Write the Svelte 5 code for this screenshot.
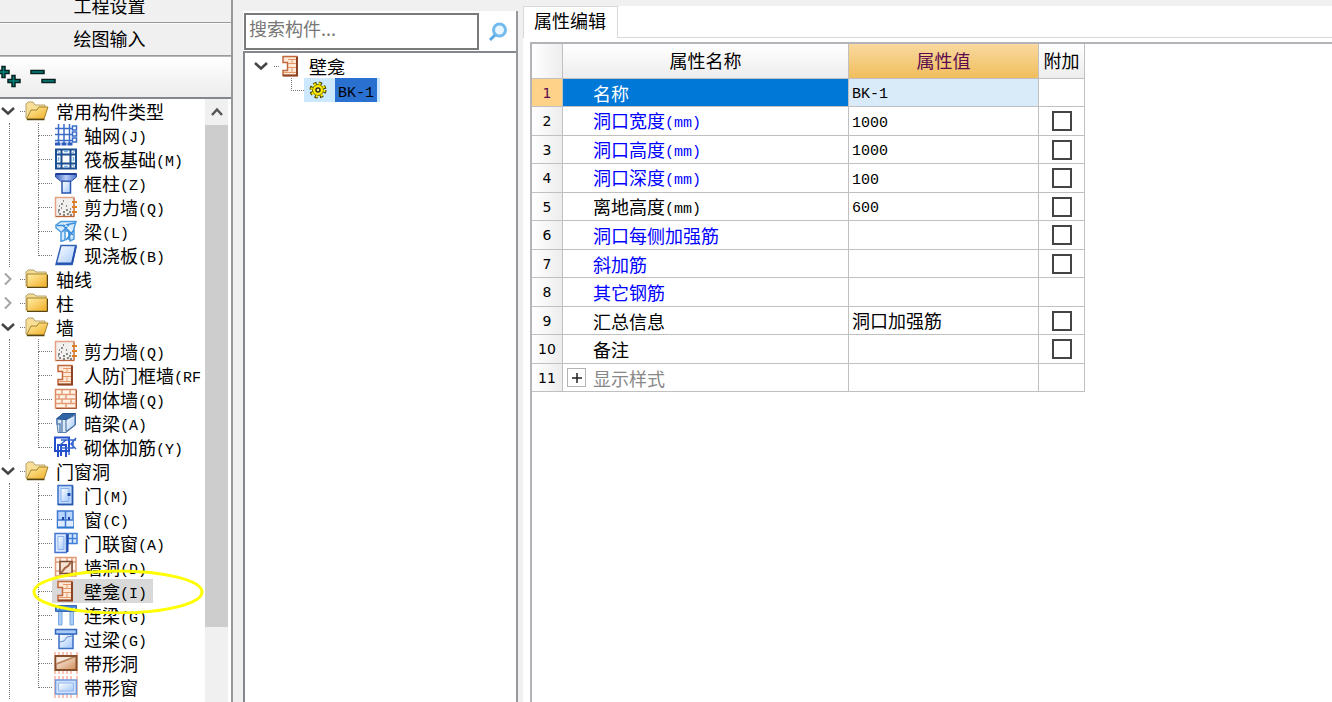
<script>
	let groups = $state([
		{
			name: '常用构件类型',
			open: true,
			items: [
				{ name: '轴网', code: '(J)', icon: 'grid' },
				{ name: '筏板基础', code: '(M)', icon: 'raft' },
				{ name: '框柱', code: '(Z)', icon: 'column' },
				{ name: '剪力墙', code: '(Q)', icon: 'shear' },
				{ name: '梁', code: '(L)', icon: 'beam' },
				{ name: '现浇板', code: '(B)', icon: 'slab' }
			]
		},
		{ name: '轴线', open: false, items: [] },
		{ name: '柱', open: false, items: [] },
		{
			name: '墙',
			open: true,
			items: [
				{ name: '剪力墙', code: '(Q)', icon: 'shear' },
				{ name: '人防门框墙', code: '(RF', icon: 'niche' },
				{ name: '砌体墙', code: '(Q)', icon: 'brick' },
				{ name: '暗梁', code: '(A)', icon: 'hidden' },
				{ name: '砌体加筋', code: '(Y)', icon: 'rebar' }
			]
		},
		{
			name: '门窗洞',
			open: true,
			items: [
				{ name: '门', code: '(M)', icon: 'door' },
				{ name: '窗', code: '(C)', icon: 'window' },
				{ name: '门联窗', code: '(A)', icon: 'doorwin' },
				{ name: '墙洞', code: '(D)', icon: 'hole' },
				{ name: '壁龛', code: '(I)', icon: 'niche', marked: true },
				{ name: '连梁', code: '(G)', icon: 'link' },
				{ name: '过梁', code: '(G)', icon: 'lintel' },
				{ name: '带形洞', code: '', icon: 'striphole' },
				{ name: '带形窗', code: '', icon: 'stripwin' }
			]
		}
	]);

	let rows = $state([
		{ name: '名称', value: 'BK-1', kind: 'active' },
		{ name: '洞口宽度', unit: '(mm)', value: '1000', kind: 'key', extra: false },
		{ name: '洞口高度', unit: '(mm)', value: '1000', kind: 'key', extra: false },
		{ name: '洞口深度', unit: '(mm)', value: '100', kind: 'key', extra: false },
		{ name: '离地高度', unit: '(mm)', value: '600', kind: 'plain', extra: false },
		{ name: '洞口每侧加强筋', value: '', kind: 'key', extra: false },
		{ name: '斜加筋', value: '', kind: 'key', extra: false },
		{ name: '其它钢筋', value: '', kind: 'key' },
		{ name: '汇总信息', value: '洞口加强筋', kind: 'plain', extra: false },
		{ name: '备注', value: '', kind: 'plain', extra: false },
		{ name: '显示样式', value: '', kind: 'folded' }
	]);

	let selected = $state('壁龛');
	let componentOpen = $state(true);

	function setAll(open) {
		groups.forEach((g) => {
			if (g.items.length) g.open = open;
		});
	}

	const isLatin = (text) => /^[\x20-\x7e]+$/.test(text);
</script>

{#snippet chevron(open)}
	<svg class="chevron" width="16" height="16" viewBox="0 0 16 16" aria-hidden="true">
		{#if open}
			<path d="M2 5L8 10.500L14 5" fill="none" stroke="#444" stroke-width="2.500" />
		{:else}
			<path d="M5 2.500L10.500 8L5 13.500" fill="none" stroke="#a6a6a6" stroke-width="2" />
		{/if}
	</svg>
{/snippet}

{#snippet folder(open)}
	<svg class="folder" width="24" height="20" viewBox="0 0 24 20" aria-hidden="true">
		{#if open}
			<path d="M1 17V3L3 1H8L10 4H20V8" fill="#f7df98" stroke="#b5a36e" />
			<path d="M1.500 18L6 9H12L14 6H23L19 18Z" fill="url(#gold)" stroke="#a5822f" />
			<path d="M2 18.500H19.500" stroke="#5a4413" stroke-width="1.500" />
		{:else}
			<path d="M1 17V3L3 1H9L11 3H21V17Z" fill="#f1dc97" stroke="#b5a36e" />
			<path d="M2 5H22V18H2Z" fill="url(#gold)" stroke="#a5822f" />
			<path d="M2 18.500H22.500V6" fill="none" stroke="#5a4413" />
		{/if}
	</svg>
{/snippet}

{#snippet icon(name)}
	<svg class="icon" width="24" height="22" viewBox="0 0 24 22" aria-hidden="true">
		{#if name === 'grid'}
			<path d="M1 4.500H18M1 10.500H18M1 16.500H18M4.500 0V19M10 0V19M15.500 0V19" stroke="#3a6cc8" stroke-width="1.500" />
			<path d="M18.500 2h4v4h-4zM18.500 8h4v4h-4zM18.500 14h4v4h-4z" fill="#fff" stroke="#3a6cc8" stroke-width="1.500" />
			<path d="M1 18.500h5.500v3H1zM7.500 18.500h5v3h-5zM13.500 18.500h5v3h-5z" fill="#2a5cbd" />
		{:else if name === 'raft'}
			<path d="M2 1.500H22V20.500H2Z" fill="#fff" stroke="#1c4f91" stroke-width="2" />
			<path d="M7.500 2V20M16.500 2V20M2 6.500H22M2 15.500H22" stroke="#1c4f91" stroke-width="2" />
			<path d="M10 3.500H14M10 18.500H14M4.500 9V13M19.500 9V13" stroke="#79b4e8" stroke-width="1.500" />
			<path d="M9 8.500H15V13.500H9Z" fill="#fff" />
			<path d="M3.500 3L6 5.500M20.500 3L18 5.500M3.500 19L6 16.500M20.500 19L18 16.500" stroke="#4b8cd0" />
		{:else if name === 'column'}
			<path d="M8 9H16.500V21H8Z" fill="url(#blue)" stroke="#2a57b0" stroke-width="1.500" />
			<path d="M1.500 1.500H22.500V5L17.500 9H6.500L1.500 5Z" fill="url(#column)" stroke="#2a4fa6" />
			<path d="M2 2H22" stroke="#1d3f98" stroke-width="2" />
		{:else if name === 'shear'}
			<path d="M1.500 1.500H20V20.500H1.500Z" fill="#f2f0ef" stroke="#e3a283" stroke-width="1.500" />
			<path d="M20 2V20.500H2" fill="none" stroke="#b9643a" />
			<path d="M4 14h2M7 12h1M5 18h2M9 16h2M12 14h2M15 16h2M13 18h2M16 13h1M7 8h2M5 10h1M9 5h1M12 10h1M9 19h2M16 19h2M4 16h1" stroke="#666" stroke-width="1.500" />
			<path d="M18 6H23M18 11H23M18 16H23" stroke="#dc8023" stroke-width="2" />
		{:else if name === 'beam'}
			<path d="M2 5L7 1.500H22L20 8V19L16 21L15 12L11 10V20L7 21.500V12L2 8Z" fill="#d5eafc" stroke="#4b9be0" stroke-width="1.500" />
			<path d="M3 5.500H9L19 15M9 5.500L21 3M8 12L15 5M12 20L20 10M15 12V20" fill="none" stroke="#3a8ddb" stroke-width="1.500" />
			<path d="M10 3.500L18 11" stroke="#fff" />
		{:else if name === 'slab'}
			<path d="M7 1.500H22L18 20.500H2Z" fill="url(#blue)" stroke="#3563b5" stroke-width="1.500" />
			<path d="M2 19.500H18L22 2" fill="none" stroke="#2354b0" stroke-width="2" />
		{:else if name === 'niche'}
			<path d="M4 1.500H18V20.500H4V15.500H8.500V7.500H4Z" fill="#ffe9d6" stroke="#c1673c" stroke-width="1.500" />
			<path d="M9 4.500H17M9 8.500H17M9 12.500H17M5 17.500H17M13 5V8M13 13V17" stroke="#e29a6b" />
			<path d="M18 2V20.500H4" fill="none" stroke="#8d4321" stroke-width="2" />
		{:else if name === 'brick'}
			<path d="M1.500 1.500H22V20H1.500Z" fill="#fff3e8" stroke="#d98a66" stroke-width="1.500" />
			<path d="M2 6.500H22M2 11H22M2 15.500H22M8 2V6M16 2V6M12 7V11M8 11V15M17 11V15M5 7V11M12 16V20" stroke="#e39c76" stroke-width="1.500" />
			<path d="M2 20.500H22.500V2" fill="none" stroke="#a85b38" />
		{:else if name === 'hidden'}
			<path d="M2.500 7L9 1.500H21.500V13L12 20.500H4Z" fill="#dce8f5" stroke="#587ead" />
			<path d="M2.500 7L9 1.500H21.500L12 7.500Z" fill="#2f65a7" stroke="#24548f" />
			<path d="M12 8L21 3V13L12 19.500Z" fill="url(#blue)" stroke="#3a65a0" />
			<path d="M3 7V12H6V20M8 8V20" fill="none" stroke="#6087b8" stroke-width="1.500" />
		{:else if name === 'rebar'}
			<path d="M1 1.500H15V15H1ZM4 21V9H12V21M7 9V20" fill="none" stroke="#2450cb" stroke-width="2" />
			<path d="M7 4H22M19 4V12H6M6 9L12 4M22 2L17 8L22 13M15 15V19" fill="none" stroke="#3566cf" stroke-width="1.500" />
		{:else if name === 'door'}
			<path d="M4 1.500H18.500V20.500H4Z" fill="#c4dcff" stroke="#3a6fc4" stroke-width="1.500" />
			<path d="M7 4.500H15V17.500H7Z" fill="url(#blue)" stroke="#86b0ee" />
			<path d="M13.500 9h3v3h-3z" fill="#1c47a8" />
			<path d="M18.500 2V20.500H4" fill="none" stroke="#2557ab" stroke-width="1.500" />
		{:else if name === 'window'}
			<path d="M3.500 3H19V19.500H3.500Z" fill="#b7d5ff" stroke="#4079cf" stroke-width="1.500" />
			<path d="M4 12H19V19H4Z" fill="#dcebff" />
			<path d="M11.500 3V20M4 12H19" stroke="#4079cf" stroke-width="1.500" />
			<path d="M8 9h2v3H8zM14 9h2v3h-2z" fill="#1c47a8" />
			<path d="M3 19.500H20" stroke="#2f7ad0" stroke-width="2" />
		{:else if name === 'doorwin'}
			<path d="M1 1.500H12.500V20.500H1Z" fill="#dceaff" stroke="#4576cf" stroke-width="1.500" />
			<path d="M4 4.500H10V17.500H4Z" fill="url(#blue)" stroke="#8cb1ee" />
			<path d="M14 1.500H23V11.500H14ZM18.500 1V12M14 6.500H23" fill="#d5e7ff" stroke="#4280d8" stroke-width="1.500" />
			<path d="M13.500 2V20" stroke="#234fae" stroke-width="2" />
		{:else if name === 'hole'}
			<path d="M1.500 1.500H22V20H1.500ZM2 6H22M2 15H22M6 2V20M13 2V6M18 2V20" fill="#fff5ec" stroke="#e09c78" stroke-width="1.500" />
			<path d="M6 5.500H18V17.500H6Z" fill="#f6e2d2" stroke="#7d4a30" stroke-width="1.500" />
			<path d="M7 17L11 12L14 10L17 6" fill="none" stroke="#a06441" stroke-width="2" />
		{:else if name === 'link'}
			<path d="M4.500 7H8V21H4.500ZM16 7H19.500V21H16Z" fill="#a9cdf6" stroke="#78a9e2" />
			<path d="M1.500 1.500H22.500V7.500H1.500Z" fill="#4a83d4" stroke="#3567b9" />
			<path d="M3 4.500H22" stroke="#c5dcfa" stroke-width="1.500" stroke-dasharray="2 2" />
		{:else if name === 'lintel'}
			<path d="M5 6H19V20.500H5Z" fill="url(#blue)" stroke="#3a6fc4" stroke-width="1.500" />
			<path d="M1.500 1.500H22.500V6H1.500Z" fill="#a6c9f6" stroke="#3568bd" stroke-width="1.500" />
			<path d="M6 14L10 13L13 9L18 8" fill="none" stroke="#5b8cd2" />
		{:else if name === 'striphole'}
			<path d="M1 0V22M5 0V4M9 0V4M13 0V4M17 0V4M23 0V22M5 18V22M9 18V22M13 18V22M17 18V22" stroke="#fbc3b5" stroke-width="2" />
			<path d="M1.500 4H22.500V18H1.500Z" fill="url(#brown)" stroke="#85502d" stroke-width="2" />
			<path d="M2.500 5V13L10 10L22 5Z" fill="#b98560" />
			<path d="M2.500 5H18L2.500 11Z" fill="#f6e8dc" />
		{:else if name === 'stripwin'}
			<path d="M1 0V22M5 0V4M9 0V4M13 0V4M17 0V4M23 0V22M5 18V22M9 18V22M13 18V22M17 18V22" stroke="#fbc3b5" stroke-width="2" />
			<path d="M1.500 4H22.500V18H1.500Z" fill="#cfe0fb" stroke="#6f9be0" stroke-width="1.500" />
			<path d="M4.500 7H19.500V15H4.500Z" fill="url(#blue)" stroke="#94b8f0" />
		{/if}
	</svg>
{/snippet}

<svg class="defs" width="0" height="0" aria-hidden="true">
	<defs>
		<linearGradient id="gold" x1="0" y1="0" x2="1" y2="1">
			<stop offset="0" stop-color="#fff0a8" />
			<stop offset="1" stop-color="#f0ac24" />
		</linearGradient>
		<linearGradient id="blue" x1="0" y1="0" x2="1" y2="1">
			<stop offset="0" stop-color="#fff" />
			<stop offset="1" stop-color="#a3c8f9" />
		</linearGradient>
		<linearGradient id="column" x1="0" y1="0" x2="1" y2="0">
			<stop offset="0" stop-color="#3c62bd" />
			<stop offset="0.500" stop-color="#b7ccf8" />
			<stop offset="1" stop-color="#4a74cb" />
		</linearGradient>
		<linearGradient id="brown" x1="0" y1="0" x2="1" y2="1">
			<stop offset="0" stop-color="#fff" />
			<stop offset="1" stop-color="#d08a52" />
		</linearGradient>
	</defs>
</svg>

<div class="app">
	<aside class="modules">
		<button class="section">工程设置</button>
		<button class="section">绘图输入</button>
		<div class="toolbar">
			<button aria-label="+" onclick={() => setAll(true)}>
				<svg width="22" height="24" viewBox="0 0 22 24">
					<path d="M-2 5.500H2V1.500H5V5.500H9V8.500H5V12.500H2V8.500H-2Z" fill="#00857d" stroke="#06211f" stroke-width="1.500" />
					<path d="M8 14.500H12V10.500H15V14.500H20V17.500H15V21.500H12V17.500H8Z" fill="#00857d" stroke="#06211f" stroke-width="1.500" />
				</svg>
			</button>
			<button aria-label="-" onclick={() => setAll(false)}>
				<svg width="26" height="24" viewBox="0 0 26 24">
					<path d="M1 5.500H14V8.500H1ZM12 14.500H25V17.500H12Z" fill="#00857d" stroke="#06211f" stroke-width="1.500" />
				</svg>
			</button>
		</div>
		<div class="tree-box">
			<ul class="tree">
				{#each groups as group}
					<li>
						<button class="group" onclick={() => (group.open = !group.open)}>
							{@render chevron(group.open)}
							<span class="stub"></span>
							{@render folder(group.open)}
							<span>{group.name}</span>
						</button>
						{#if group.open}
							<ul class="children">
								{#each group.items as item}
									<li class="leaf">
										<button class:selected={selected === item.name} onclick={() => (selected = item.name)}>
											{@render icon(item.icon)}
											<span class="label">{item.name}<span class="latin">{item.code}</span></span>
										</button>
										{#if item.marked}
											<svg class="ring" width="172" height="46" viewBox="0 0 172 46" aria-hidden="true">
												<ellipse cx="86" cy="24" rx="84" ry="21" fill="none" stroke="#ff0" stroke-width="3" />
											</svg>
										{/if}
									</li>
								{/each}
							</ul>
						{/if}
					</li>
				{/each}
			</ul>
			<div class="scrollbar">
				<button aria-label="▲">
					<svg width="16" height="16" viewBox="0 0 16 16">
						<path d="M3 11L8 5.500L13 11" fill="none" stroke="#555" stroke-width="2.500" />
					</svg>
				</button>
				<div class="thumb"></div>
				<div class="track"></div>
			</div>
		</div>
	</aside>

	<section class="components">
		<form class="search" onsubmit={(e) => e.preventDefault()}>
			<input type="text" placeholder="搜索构件..." aria-label="搜索构件" />
			<button aria-label="搜索构件">
				<svg width="22" height="22" viewBox="0 0 22 22">
					<circle cx="12.500" cy="9" r="6" fill="#e9f6ff" stroke="#72bbee" stroke-width="3" />
					<path d="M8 14L3 19" stroke="#5aa8e2" stroke-width="3" />
				</svg>
			</button>
		</form>
		<ul class="instances">
			<li>
				<button class="parent" onclick={() => (componentOpen = !componentOpen)}>
					{@render chevron(componentOpen)}
					<span class="stub"></span>
					{@render icon('niche')}
					<span>壁龛</span>
				</button>
				{#if componentOpen}
					<ul>
						<li class="instance">
							<button>
								<svg width="18" height="18" viewBox="0 0 18 18" aria-hidden="true">
									<circle cx="9" cy="9" r="6.500" fill="none" stroke="#4a4700" stroke-width="4" stroke-dasharray="3 2.100" />
									<circle cx="9" cy="9" r="5.500" fill="#ffec00" stroke="#6d6800" />
									<circle cx="9" cy="9" r="6.500" fill="none" stroke="#ffec00" stroke-width="2" stroke-dasharray="2 3.100" />
									<circle cx="9" cy="9" r="2" fill="#fff56b" stroke="#333" stroke-width="1.500" />
								</svg>
								<span class="tag"><span class="latin">BK-1</span></span>
							</button>
						</li>
					</ul>
				{/if}
			</li>
		</ul>
	</section>

	<main class="properties">
		<div class="tabs">
			<button class="tab">属性编辑</button>
		</div>
		<div class="sheet">
			<table>
				<thead>
					<tr>
						<th class="num"></th>
						<th class="name">属性名称</th>
						<th class="value current">属性值</th>
						<th class="extra">附加</th>
					</tr>
				</thead>
				<tbody>
					{#each rows as row, i}
						<tr class={row.kind}>
							<th class="num" scope="row">{i + 1}</th>
							<td class="name">
								<div class="cell">
									<span class="fold">
										{#if row.kind === 'folded'}
											<button aria-label="+">
												<svg width="12" height="12" viewBox="0 0 12 12">
													<path d="M6 1V11M1 6H11" stroke="#222" stroke-width="1.500" />
												</svg>
											</button>
										{/if}
									</span>
									<span>{row.name}{#if row.unit}<span class="latin">{row.unit}</span>{/if}</span>
								</div>
							</td>
							<td class="value"><span class:latin={isLatin(row.value)}>{row.value}</span></td>
							<td class="extra">
								{#if row.extra !== undefined}
									<input type="checkbox" bind:checked={row.extra} aria-label={row.name} />
								{/if}
							</td>
						</tr>
					{/each}
				</tbody>
			</table>
		</div>
	</main>
</div>

<style>
	:global(body) {
		background: #f0f0f0;
	}

	.app {
		display: flex;
		height: 100vh;
		overflow: hidden;
		font-family: 'Noto Sans CJK SC', sans-serif;
		font-size: 18px;
		line-height: 24px;
		color: #000;
	}

	.defs {
		position: absolute;
	}

	button {
		padding: 0;
		border: 0;
		background: none;
		font: inherit;
		color: inherit;
		text-align: left;
	}

	svg {
		display: block;
		flex: none;
	}

	ul {
		margin: 0;
		padding: 0;
		list-style: none;
	}

	.latin {
		font-family: 'Liberation Mono', monospace;
		font-size: 15px;
		line-height: 16px;
		vertical-align: 1px;
	}

	/* module navigation */
	.modules {
		display: flex;
		flex-direction: column;
		flex: none;
		box-sizing: border-box;
		width: 233px;
		margin-top: -10px;
		border-right: 2px solid #96989c;
	}

	.section {
		flex: none;
		box-sizing: border-box;
		height: 33px;
		padding: 0 12px 3px 0;
		border-top: 1px solid #fafafa;
		border-bottom: 1px solid #9a9a9a;
		text-align: center;
	}

	.toolbar {
		display: flex;
		flex: none;
		align-items: center;
		gap: 8px;
		height: 40px;
		border-top: 1px solid #b8b8b8;
		background: linear-gradient(#fff, #ececec);
	}

	.tree-box {
		display: flex;
		flex: 1;
		min-height: 0;
		padding-right: 3px;
		border-top: 2px solid #84888e;
		background: #fff;
	}

	.tree {
		flex: 1;
		min-width: 0;
		overflow: hidden;
	}

	.group {
		display: flex;
		align-items: center;
		width: 100%;
		height: 24px;
	}

	.stub {
		width: 5px;
		border-top: 1px dotted #777;
	}

	.group .stub {
		margin-left: 4px;
	}

	.folder {
		margin-right: 7px;
	}

	.children {
		margin-left: 9px;
		border-left: 1px dotted #777;
	}

	.leaf {
		position: relative;
		display: flex;
		height: 24px;
		padding: 0 4px 0 28px;
	}

	.leaf::before {
		content: '';
		box-sizing: border-box;
		flex: none;
		width: 14px;
		height: 13px;
		border-left: 1px dotted #777;
		border-bottom: 1px dotted #777;
	}

	.leaf:not(:last-child)::after {
		content: '';
		position: absolute;
		left: 28px;
		top: 12px;
		height: 12px;
		border-left: 1px dotted #777;
	}

	.leaf button {
		display: flex;
		align-items: center;
		gap: 6px;
		min-width: 0;
		padding: 0 6px 0 2px;
	}

	.leaf button.selected {
		background: #d9d9d9;
	}

	.label {
		white-space: nowrap;
	}

	.ring {
		position: absolute;
		z-index: 1;
		left: 22px;
		top: -11px;
		pointer-events: none;
	}

	.scrollbar {
		display: flex;
		flex-direction: column;
		width: 23px;
		background: #f0f0f0;
	}

	.scrollbar button {
		display: flex;
		align-items: center;
		justify-content: center;
		height: 26px;
	}

	.thumb {
		flex: 87;
		background: #cdcdcd;
	}

	.track {
		flex: 13;
	}

	/* component list */
	.components {
		display: flex;
		flex-direction: column;
		flex: none;
		box-sizing: border-box;
		width: 275px;
		margin: 11px 0 0 10px;
		border-right: 2px solid #96989c;
		background: #fff;
	}

	.search {
		display: flex;
		padding: 2px 0 1px 1px;
	}

	.search input {
		flex: 1;
		box-sizing: border-box;
		min-width: 0;
		height: 37px;
		padding: 0 3px 8px;
		border: 2px solid #7a7a7a;
		background: #fff;
		font: inherit;
	}

	.search input::placeholder {
		color: #777;
		opacity: 1;
	}

	.search button {
		display: flex;
		align-items: center;
		justify-content: center;
		width: 37px;
	}

	.instances {
		flex: 1;
		padding: 1px 8px;
		border-top: 2px solid #84888e;
		border-left: 2px solid #84888e;
	}

	.parent {
		display: flex;
		align-items: center;
		height: 24px;
	}

	.parent .stub {
		margin-left: 5px;
	}

	.parent .icon {
		margin-right: 6px;
	}

	.instance {
		display: flex;
		padding-left: 38px;
	}

	.instance::before {
		content: '';
		width: 12px;
		height: 12px;
		border-left: 1px dotted #777;
		border-bottom: 1px dotted #777;
	}

	.instance button {
		display: flex;
		align-items: center;
		gap: 8px;
		padding: 0 3px 0 5px;
		background: #cce8ff;
	}

	.tag {
		padding: 0 3px;
		background: #2a70d0;
	}

	/* property editor */
	.properties {
		display: flex;
		flex-direction: column;
		flex: 1;
		min-width: 0;
		margin: 6px 0 0 5px;
		background: #fff;
	}

	.tabs {
		display: flex;
	}

	.tabs::after {
		content: '';
		flex: 1;
		border-bottom: 1px solid #d9d9d9;
	}

	.tab {
		height: 32px;
		padding: 0 11px 5px 10px;
		border: 1px solid #d9d9d9;
		border-bottom: 0;
	}

	.sheet {
		flex: 1;
		margin: 4px 0 0 7px;
		border-top: 2px solid #b4b4b8;
		border-left: 2px solid #b4b4b8;
	}

	table {
		width: 553px;
		table-layout: fixed;
		border-spacing: 0;
	}

	th,
	td {
		box-sizing: border-box;
		height: 28px;
		padding: 0;
		border-right: 1px solid #c0c0c0;
		border-bottom: 1px solid #c0c0c0;
		font-weight: 400;
		line-height: 20px;
	}

	tbody tr:nth-child(even) > * {
		height: 29px;
	}

	thead th {
		height: 35px;
		padding-bottom: 2px;
		background: linear-gradient(#fff, #ededed);
	}

	th.num {
		width: 31px;
		background: linear-gradient(90deg, #fff, #ededed);
		font-family: 'DejaVu Sans', sans-serif;
		font-size: 14px;
	}

	th.value {
		width: 190px;
	}

	th.extra {
		width: 46px;
	}

	thead .current {
		background: linear-gradient(#f9d9a0, #f0be5c);
		color: #5c0a50;
	}

	.active .num {
		background: #ffd28a;
		color: #5c0a50;
	}

	.active .name {
		background: #0078d7;
		color: #fff;
	}

	.active .value {
		background: #d9eaf8;
	}

	.key .name {
		color: #00f;
	}

	.folded .name {
		color: #888;
	}

	.cell {
		display: flex;
		align-items: center;
	}

	.fold {
		width: 26px;
		margin-left: 4px;
	}

	.fold button {
		display: flex;
		align-items: center;
		justify-content: center;
		box-sizing: border-box;
		width: 19px;
		height: 19px;
		border: 1px solid #b4b4b4;
	}

	td.value {
		padding: 0 0 1px 3px;
	}

	td.extra {
		text-align: center;
	}

	td.extra input {
		appearance: none;
		display: block;
		box-sizing: border-box;
		width: 20px;
		height: 20px;
		margin: 0 auto;
		border: 2px solid #444;
		background: #fff;
	}

	td.extra input:checked {
		background: #444;
	}
</style>
